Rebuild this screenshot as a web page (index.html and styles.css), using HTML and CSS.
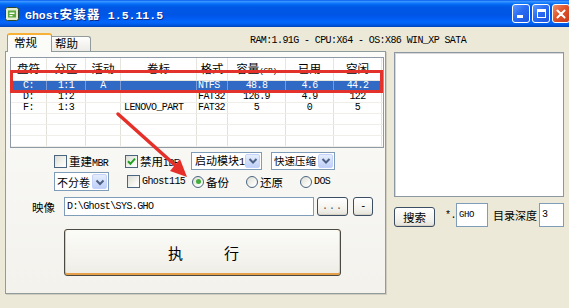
FILE: index.html
```html
<!DOCTYPE html>
<html lang="zh-CN">
<head>
<meta charset="utf-8">
<title>Ghost安装器 1.5.11.5</title>
<link rel="stylesheet" href="styles.css">
</head>
<body>
<div class="window">
  <div class="titlebar">
    <svg class="app-icon" viewBox="0 0 14 14" width="14" height="14">
      <rect x="0.5" y="0.5" width="13" height="13" rx="2" fill="#e4ecd2" stroke="#2c4a2a"/>
      <path d="M3 3.5 h8 v7 h-8z" fill="#5da83e"/>
      <path d="M4.5 5.5 h5 v1.5 h-5z M4.5 8 h3 v1.2 h-3z" fill="#fff"/>
    </svg>
    <div class="title">Ghost<span class="tcjk">安装器</span> 1.5.11.5</div>
    <div class="caption-btns">
      <div class="cbtn"><span class="min-glyph"></span></div>
      <div class="cbtn"><span class="max-glyph"></span></div>
      <div class="cbtn close">
        <svg viewBox="0 0 18 18" width="18" height="18"><path d="M5 5 L13 13 M13 5 L5 13" stroke="#fff" stroke-width="2.2" stroke-linecap="round"/></svg>
      </div>
    </div>
  </div>

  <div class="client">
    <div class="toprow">
      <div class="tabs">
        <div class="tab active">常规</div>
        <div class="tab">帮助</div>
      </div>
      <div class="sysinfo mono">RAM:1.91G - CPU:X64 - OS:X86 WIN_XP SATA</div>
    </div>

    <div class="mainrow">
      <div class="pane">
        <div class="listview">
          <div class="lv-row lv-head">
            <div class="c">盘符</div><div class="c">分区</div><div class="c">活动</div><div class="c">卷标</div><div class="c">格式</div><div class="c">容量<span class="gb">(GB)</span></div><div class="c">已用</div><div class="c">空闲</div>
          </div>
          <div class="lv-row sel mono">
            <div class="c">C:</div><div class="c">1:1</div><div class="c">A</div><div class="c l"></div><div class="c f">NTFS</div><div class="c">48.8</div><div class="c">4.6</div><div class="c">44.2</div>
          </div>
          <div class="lv-row mono">
            <div class="c">D:</div><div class="c">1:2</div><div class="c"></div><div class="c l"></div><div class="c f">FAT32</div><div class="c">126.9</div><div class="c">4.9</div><div class="c">122</div>
          </div>
          <div class="lv-row mono">
            <div class="c">F:</div><div class="c">1:3</div><div class="c"></div><div class="c l">LENOVO_PART</div><div class="c f">FAT32</div><div class="c">5</div><div class="c">0</div><div class="c">5</div>
          </div>
          <div class="lv-row"><div class="c"></div><div class="c"></div><div class="c"></div><div class="c"></div><div class="c"></div><div class="c"></div><div class="c"></div><div class="c"></div></div>
          <div class="lv-row"><div class="c"></div><div class="c"></div><div class="c"></div><div class="c"></div><div class="c"></div><div class="c"></div><div class="c"></div><div class="c"></div></div>
          <div class="lv-row"><div class="c"></div><div class="c"></div><div class="c"></div><div class="c"></div><div class="c"></div><div class="c"></div><div class="c"></div><div class="c"></div></div>
        </div>

        <div class="ctl-row row1">
          <label class="opt w-mbr"><span class="cb"></span><span class="lbl">重建<span class="mono">MBR</span></span></label>
          <label class="opt w-ide"><span class="cb checked"><svg viewBox="0 0 13 13" width="13" height="13"><path d="M3 6.2 L5.4 8.8 L10 3.6" fill="none" stroke="#21a121" stroke-width="2"/></svg></span><span class="lbl">禁用<span class="mono">IDE</span></span></label>
          <div class="combo w-boot"><span class="ctext">启动模块<span class="mono">1</span></span><span class="dd"><svg viewBox="0 0 16 16" width="16" height="16"><path d="M4.5 6 L8 9.5 L11.5 6" fill="none" stroke="#4d6185" stroke-width="2"/></svg></span></div>
          <div class="combo w-comp"><span class="ctext">快速压缩</span><span class="dd"><svg viewBox="0 0 16 16" width="16" height="16"><path d="M4.5 6 L8 9.5 L11.5 6" fill="none" stroke="#4d6185" stroke-width="2"/></svg></span></div>
        </div>

        <div class="ctl-row row2">
          <div class="combo w-split"><span class="ctext">不分卷</span><span class="dd"><svg viewBox="0 0 16 16" width="16" height="16"><path d="M4.5 6.5 L8 10 L11.5 6.5" fill="none" stroke="#4d6185" stroke-width="2"/></svg></span></div>
          <label class="opt w-g115"><span class="cb"></span><span class="lbl mono">Ghost115</span></label>
          <label class="opt w-radio"><span class="rb checked"></span><span class="lbl">备份</span></label>
          <label class="opt w-radio"><span class="rb"></span><span class="lbl">还原</span></label>
          <label class="opt"><span class="rb"></span><span class="lbl mono">DOS</span></label>
        </div>

        <div class="ctl-row row3">
          <span class="img-label">映像</span>
          <div class="textbox w-path mono">D:\Ghost\SYS.GHO</div>
          <div class="xpbtn w-browse mono">...</div>
          <div class="xpbtn w-minus mono">-</div>
        </div>

        <div class="exec-btn"><span>执</span><span>行</span></div>
      </div>

      <div class="side">
        <div class="listbox"></div>
        <div class="search-row">
          <div class="xpbtn w-search">搜索</div>
          <span class="star mono">*.</span>
          <div class="textbox w-ext mono">GHO</div>
          <span class="depth-label">目录深度</span>
          <div class="textbox w-depth mono">3</div>
        </div>
      </div>
    </div>
  </div>

  <div class="highlight"></div>
  <svg class="arrow" viewBox="0 0 569 308" width="569" height="308">
    <line x1="118" y1="114" x2="176" y2="166" stroke="#e5302a" stroke-width="3.5" stroke-linecap="round"/>
    <polygon points="187,177 170,171 180,159" fill="#e5302a"/>
  </svg>
</div>
</body>
</html>
```

FILE: styles.css
```css
* { box-sizing: border-box; }
html, body { margin: 0; padding: 0; }
body {
  width: 569px;
  height: 308px;
  overflow: hidden;
  background: #ece9d8;
  font-family: "Noto Sans CJK SC", "Noto Sans", sans-serif;
  font-size: 11px;
  color: #000;
}
.mono {
  font-family: "Liberation Mono", "DejaVu Sans Mono", monospace;
  font-size: 10px;
  letter-spacing: -0.6px;
}
.window {
  position: relative;
  width: 569px;
  height: 308px;
  overflow: hidden;
  background: #ece9d8;
}

/* title bar */
.titlebar {
  height: 27px;
  display: flex;
  align-items: center;
  padding-left: 5px;
  background: linear-gradient(to bottom, #0058ee 0%, #3d95ff 5%, #2a8cff 8%, #0f78fb 12%, #0266f0 18%, #0058e6 26%, #0055e5 55%, #005bf3 68%, #0366fb 80%, #0260ef 88%, #0053d8 94%, #0045b8 100%);
}
.app-icon { flex: none; margin-right: 6px; }
.title {
  color: #fff;
  font-family: "Liberation Mono", "DejaVu Sans Mono", monospace;
  font-weight: bold;
  font-size: 11.5px;
  text-shadow: 1px 1px 0 #0a2a8a;
  white-space: nowrap;
}
.title .tcjk {
  font-family: "Noto Sans CJK SC", sans-serif;
  font-size: 12.5px;
  letter-spacing: 1.3px;
}
.caption-btns {
  margin-left: auto;
  margin-right: -1px;
  display: flex;
  gap: 2px;
}
.cbtn {
  width: 18px;
  height: 19px;
  border: 1px solid #fff;
  border-radius: 3px;
  background: linear-gradient(135deg, #5a98ff 0%, #2a6cf2 45%, #1b55e0 100%);
  position: relative;
  display: flex;
  align-items: center;
  justify-content: center;
}
.cbtn.close {
  background: linear-gradient(135deg, #f09070 0%, #e0542a 45%, #c8391a 100%);
}
.min-glyph {
  position: absolute;
  left: 4px;
  bottom: 4px;
  width: 6px;
  height: 3px;
  background: #fff;
}
.max-glyph {
  width: 9px;
  height: 9px;
  border: 1px solid #fff;
  border-top-width: 3px;
}

/* client */
.client {
  padding: 6px 0 0 5px;
}
.toprow {
  height: 18px;
  display: flex;
  align-items: flex-end;
}
.tabs {
  display: flex;
  align-items: flex-end;
  margin-left: 2px;
  position: relative;
  z-index: 2;
}
.tab {
  width: 39px;
  height: 15px;
  border: 1px solid #919b9c;
  border-left: none;
  border-bottom: none;
  border-radius: 0 3px 0 0;
  background: linear-gradient(#fefefe, #ecebe6);
  line-height: 13px;
  padding-left: 3px;
  font-size: 11.5px;
}
.tab.active {
  width: 45px;
  height: 19px;
  margin-bottom: -1px;
  border-left: 1px solid #919b9c;
  border-top: 2px solid #f7b136;
  border-radius: 3px 3px 0 0;
  background: #fbfbf8;
  line-height: 15px;
  padding-left: 6px;
}
.sysinfo {
  align-self: center;
  margin-left: 159px;
  margin-top: -2px;
  line-height: 12px;
  white-space: nowrap;
}

.mainrow {
  display: flex;
  align-items: flex-start;
  gap: 8px;
}
.pane {
  width: 381px;
  height: 243px;
  border: 1px solid #919b9c;
  background: linear-gradient(#fbfbf9, #f3f2ed);
  padding: 5px 0 0 4px;
  box-shadow: 1px 1px 0 #d0cdbe;
}

/* list view */
.listview {
  width: 374px;
  height: 91px;
  border: 1px solid #8f9aa6;
  background: #fff;
  overflow: hidden;
}
.lv-row {
  display: grid;
  grid-template-columns: 36px 39px 35px 76px 31px 58px 48px 48px;
  height: 11px;
  border-bottom: 1px solid #efeee8;
}
.lv-row .c {
  border-right: 1px solid #e2e1da;
  text-align: center;
  line-height: 10px;
  white-space: nowrap;
  overflow: hidden;
}
.lv-row .c.l { text-align: left; padding-left: 3px; }
.lv-row .c.f { text-align: left; padding-left: 1px; }
.lv-head {
  height: 23px;
  border-bottom: 1px solid #e6e5de;
}
.lv-head .c {
  line-height: 20px;
  font-size: 11.5px;
  border-right-color: #e6e5de;
}
.lv-head .gb {
  font-family: "Liberation Mono", monospace;
  font-size: 8px;
  letter-spacing: -0.4px;
}
.lv-row.sel {
  background: #316ac5;
  color: #fff;
  border-bottom-color: #316ac5;
}
.lv-row.sel .c { border-right-color: #7b9ad6; }

/* controls */
.ctl-row {
  display: flex;
  align-items: center;
}
.row1 { margin-top: 4px; height: 18px; padding-left: 44px; }
.row2 { margin-top: 2px; height: 19px; padding-left: 44px; }
.row3 { margin-top: 6px; height: 19px; padding-left: 22px; }

.opt {
  display: flex;
  align-items: center;
  height: 100%;
}
.w-mbr { width: 71px; }
.w-ide { width: 66px; }
.w-g115 { width: 64px; margin-left: 18px; }
.w-radio { width: 54px; }
.lbl { margin-left: 2px; white-space: nowrap; font-size: 11.5px; }
.lbl .mono { font-size: 10px; }
.lbl.mono { font-size: 10px; }

.cb {
  width: 13px;
  height: 13px;
  flex: none;
  border: 1px solid #4a6580;
  background: linear-gradient(135deg, #dcdcd4 0%, #f4f4f0 60%, #fff 100%);
  display: flex;
  align-items: center;
  justify-content: center;
}
.cb svg { margin: -1px; }
.rb {
  width: 12px;
  height: 12px;
  flex: none;
  border: 1px solid #4a6580;
  border-radius: 50%;
  background: linear-gradient(135deg, #dcdcd4 0%, #f6f6f2 60%, #fff 100%);
  margin-left: 1px;
  position: relative;
}
.rb.checked::after {
  content: "";
  position: absolute;
  left: 2.5px;
  top: 2.5px;
  width: 5px;
  height: 5px;
  border-radius: 50%;
  background: #3fae3a;
}

.combo {
  height: 18px;
  display: flex;
  align-items: center;
  border: 1px solid #7f9db9;
  background: #fff;
  padding: 1px;
}
.ctext {
  flex: 1;
  padding-left: 2px;
  line-height: 14px;
  white-space: nowrap;
  overflow: hidden;
  font-size: 11px;
}
.ctext .mono { font-size: 10px; letter-spacing: 0; }
.dd {
  width: 15px;
  height: 14px;
  flex: none;
  border: 1px solid #c3d3fd;
  border-radius: 2px;
  background: linear-gradient(#e6eefc, #bfd0f7);
  display: flex;
  align-items: center;
  justify-content: center;
}
.dd svg { margin: -2px; }
.w-boot { width: 71px; }
.w-comp { width: 64px; margin-left: 9px; }
.w-comp .ctext { padding-left: 1px; font-size: 10.5px; }
.w-split { width: 55px; height: 19px; }
.w-split .dd { height: 15px; }
.w-split .ctext { padding-left: 1px; }

.img-label { width: 32px; font-size: 11.5px; }
.textbox {
  height: 19px;
  border: 1px solid #7f9db9;
  background: #fff;
  line-height: 17px;
  padding-left: 2px;
  white-space: nowrap;
}
.w-path { width: 250px; }
.xpbtn {
  height: 19px;
  border: 1px solid #3c4e64;
  border-radius: 3px;
  background: linear-gradient(#ffffff 0%, #f4f3ee 60%, #e4e2da 100%);
  box-shadow: inset 0 -1px 0 #d6d0c5;
  display: flex;
  align-items: center;
  justify-content: center;
}
.w-browse { width: 31px; margin-left: 3px; letter-spacing: 1px; color: #555; }
.w-minus { width: 20px; margin-left: 5px; }

.exec-btn {
  width: 277px;
  height: 47px;
  margin: 13px 0 0 54px;
  border: 1px solid #4a4a42;
  border-radius: 3px;
  background: linear-gradient(#fbfbf8 0%, #f3f2ec 70%, #ecebe4 100%);
  box-shadow: inset 0 -2px 0 #e7a04a, inset 1px 0 0 #f2c88a, inset -1px 0 0 #f2c88a;
  display: flex;
  align-items: center;
  justify-content: center;
  gap: 41px;
  font-size: 15px;
  padding-left: 2px;
}

/* right column */
.side {
  width: 170px;
  margin-top: 1px;
}
.listbox {
  height: 145px;
  border: 1px solid #8c97a3;
  background: #fff;
  box-shadow: inset 1px 1px 0 #d8d8d8;
}
.search-row {
  margin-top: 6px;
  height: 24px;
  display: flex;
  align-items: flex-end;
}
.w-search { width: 41px; height: 20px; font-size: 11.5px; }
.star { align-self: center; margin-left: 10px; width: 11px; }
.w-ext { width: 32px; height: 24px; line-height: 22px; font-size: 9px; letter-spacing: -0.4px; }
.depth-label { align-self: center; margin-left: 5px; width: 46px; white-space: nowrap; font-size: 11px; }
.w-depth { width: 25px; height: 24px; line-height: 22px; }

/* overlays */
.highlight {
  position: absolute;
  left: 10px;
  top: 70px;
  width: 373px;
  height: 23px;
  border: 3px solid #e3312c;
}
.arrow {
  position: absolute;
  left: 0;
  top: 0;
  pointer-events: none;
}
```
